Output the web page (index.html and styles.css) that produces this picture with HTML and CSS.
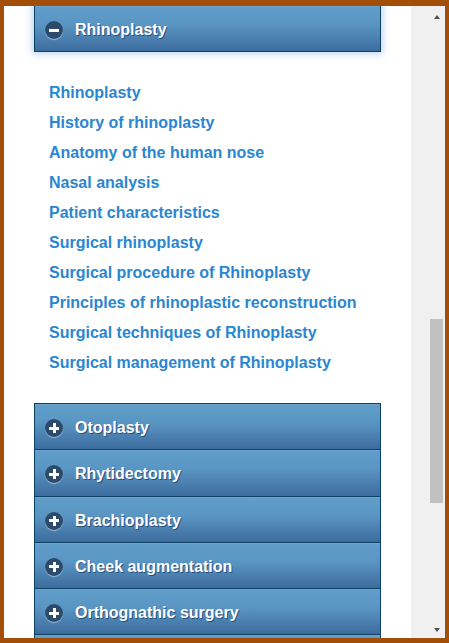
FILE: index.html
```html
<!DOCTYPE html>
<html>
<head>
<meta charset="utf-8">
<link rel="stylesheet" href="styles.css">
</head>
<body>
<div class="frame">
  <div class="viewport">
    <div class="accordion">
      <div class="panel open">
        <div class="head"><span class="ico minus"></span><span class="title">Rhinoplasty</span></div>
        <ul class="links">
          <li><a href="#">Rhinoplasty</a></li>
          <li><a href="#">History of rhinoplasty</a></li>
          <li><a href="#">Anatomy of the human nose</a></li>
          <li><a href="#">Nasal analysis</a></li>
          <li><a href="#">Patient characteristics</a></li>
          <li><a href="#">Surgical rhinoplasty</a></li>
          <li><a href="#">Surgical procedure of Rhinoplasty</a></li>
          <li><a href="#">Principles of rhinoplastic reconstruction</a></li>
          <li><a href="#">Surgical techniques of Rhinoplasty</a></li>
          <li><a href="#">Surgical management of Rhinoplasty</a></li>
        </ul>
      </div>
      <div class="panel"><div class="head"><span class="ico plus"></span><span class="title">Otoplasty</span></div></div>
      <div class="panel"><div class="head"><span class="ico plus"></span><span class="title">Rhytidectomy</span></div></div>
      <div class="panel"><div class="head"><span class="ico plus"></span><span class="title">Brachioplasty</span></div></div>
      <div class="panel"><div class="head"><span class="ico plus"></span><span class="title">Cheek augmentation</span></div></div>
      <div class="panel"><div class="head"><span class="ico plus"></span><span class="title">Orthognathic surgery</span></div></div>
      <div class="panel"><div class="head"></div></div>
    </div>
  </div>
  <div class="scrollbar">
    <div class="sb-col">
      <div class="arrow up"></div>
      <div class="thumb"></div>
      <div class="arrow down"></div>
    </div>
  </div>
</div>
</body>
</html>
```
FILE: styles.css
```css
html, body {
  margin: 0;
  padding: 0;
}
body {
  width: 449px;
  height: 643px;
  overflow: hidden;
  font-family: "Liberation Sans", Arial, sans-serif;
}
.frame {
  box-sizing: border-box;
  width: 449px;
  height: 643px;
  border-style: solid;
  border-color: #a24e08;
  border-width: 6px 4px 5px 4px;
  display: flex;
}
.viewport {
  flex: 1;
  background: #fff;
  overflow: hidden;
  padding-left: 30px;
}
.accordion {
  width: 347px;
}
.head {
  box-sizing: border-box;
  height: 46.25px;
  display: flex;
  align-items: flex-start;
  padding: 14px 0 0 10px;
  border: 1px solid #0c4265;
  border-bottom: 0;
  background: linear-gradient(to bottom, #79aed6 0, #609dc9 1px, #5a96c3 40%, #3c6c9e 100%);
}
.panel.open .head {
  height: 47px;
  margin-top: -1px;
  border-bottom: 1px solid #0c4265;
  box-shadow: 0 0 7px 2px rgba(110, 160, 225, 0.45);
  position: relative;
}
.ico {
  width: 18px;
  height: 18px;
  margin-top: 1px;
  border-radius: 50%;
  background: #2c4b6c;
  box-shadow: 0 1px 1px rgba(190, 215, 240, 0.7);
  position: relative;
  flex: none;
}
.ico::before {
  content: "";
  position: absolute;
  left: 4px;
  top: 7.5px;
  width: 10px;
  height: 3px;
  background: #fff;
}
.ico.plus::after {
  content: "";
  position: absolute;
  left: 7.5px;
  top: 4px;
  width: 3px;
  height: 10px;
  background: #fff;
}
.title {
  margin-left: 12px;
  line-height: 20px;
  font-size: 16px;
  font-weight: bold;
  color: #fff;
  text-shadow: 1px 1px 0 rgba(10, 30, 60, 0.55);
}
.links {
  list-style: none;
  margin: 0;
  padding: 26px 0 25px 15px;
}
.links li {
  line-height: 30px;
  height: 30px;
}
.links a {
  font-size: 16px;
  font-weight: bold;
  color: #2a86d1;
  text-decoration: none;
}
.scrollbar {
  width: 34px;
  background: #f0f0f0;
  display: flex;
  justify-content: flex-end;
  padding-right: 2px;
  box-sizing: border-box;
}
.sb-col {
  width: 13px;
  display: flex;
  flex-direction: column;
  align-items: center;
}
.arrow {
  width: 0;
  height: 0;
  border-left: 3.5px solid transparent;
  border-right: 3.5px solid transparent;
}
.arrow.up {
  margin-top: 9px;
  border-bottom: 4px solid #505050;
}
.thumb {
  width: 13px;
  height: 184px;
  margin-top: 300px;
  background: #c1c1c1;
}
.arrow.down {
  margin-top: auto;
  margin-bottom: 6px;
  border-top: 4px solid #505050;
}
```
